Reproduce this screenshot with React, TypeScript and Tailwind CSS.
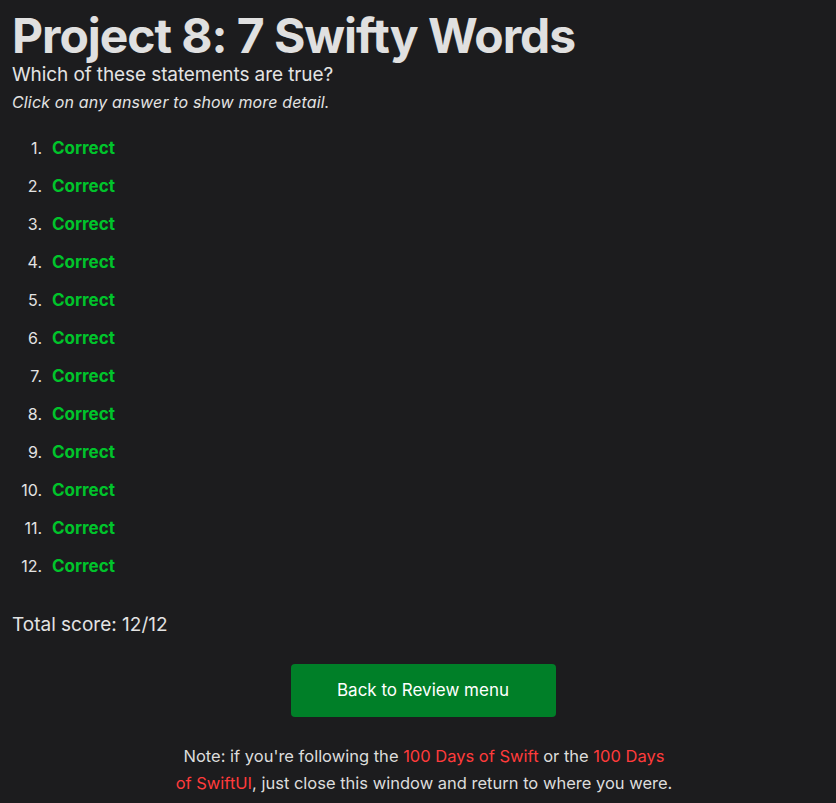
import React from "react";

export default function App() {
  const items = Array.from({ length: 12 }, (_, i) => i + 1);
  return (
    <div
      className="min-h-[803px] bg-[#1c1c1e] text-[#e3e3e3] pl-[12px] pt-[8px]"
      style={{ fontFamily: "Inter, 'Noto Sans', sans-serif" }}
    >
      <h1 className="text-[48px] font-bold leading-[56px] tracking-[-1.05px] text-[#e0e0e0]">
        Project 8: 7 Swifty Words
      </h1>
      <p className="text-[19px] leading-[26px] tracking-[-0.1px] mt-[-2px]">Which of these statements are true?</p>
      <p className="text-[16px] italic leading-[24px] tracking-[0.15px] mt-[2px]">Click on any answer to show more detail.</p>
      <ol className="mt-[22px]">
        {items.map((n) => (
          <li key={n} className="flex h-[38px] text-[16px] leading-[24px]">
            <span className="w-[30px] text-right text-[#e3e3e3]">{n}.</span>
            <span className="ml-[10px] text-[17px] font-bold text-[#00c42b]">Correct</span>
          </li>
        ))}
      </ol>
      <p className="text-[19px] leading-[26px] mt-[20px]">Total score: 12/12</p>
      <div className="flex justify-center mt-[26px] pr-[2px]">
        <button className="w-[265px] h-[53px] rounded-[4px] bg-[#007f28] text-white text-[17px]">
          Back to Review menu
        </button>
      </div>
      <p className="mx-auto max-w-[520px] text-center text-[16.5px] leading-[27px] mt-[26px] text-[#dcdcdc]">
        Note: if you're following the <span className="text-[#ff3b3b]">100 Days of Swift</span> or the{" "}
        <span className="text-[#ff3b3b]">100 Days</span>
        <br />
        <span className="text-[#ff3b3b]">of SwiftUI</span>, just close this window and return to where you were.
      </p>
    </div>
  );
}
